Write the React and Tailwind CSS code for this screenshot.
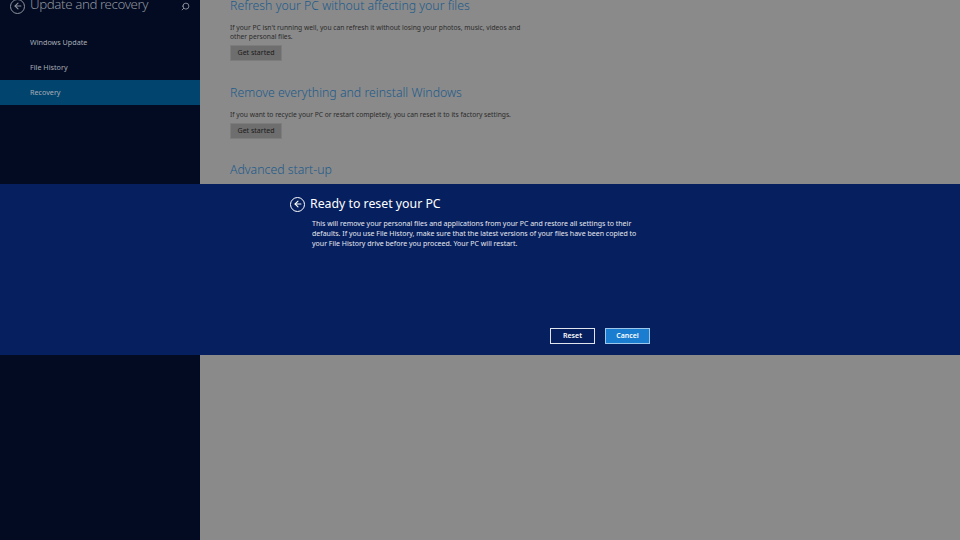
import { ArrowLeft, Search } from "lucide-react";

const BackCircle = ({ size = 15, color = "#ffffff" }) => (
  <span
    className="flex items-center justify-center rounded-full border-[1.5px] shrink-0"
    style={{ width: size, height: size, borderColor: color }}
  >
    <ArrowLeft size={size - 5} strokeWidth={2.6} color={color} />
  </span>
);

const navItems = ["Windows Update", "File History", "Recovery"];

const Section = ({ title, text, button }) => (
  <div>
    <h2 className="text-[12.3px] leading-[18px] text-[#1c5a8a] font-light">{title}</h2>
    {text && (
      <p className="mt-[8px] text-[6.7px] leading-[9px] text-[#2a2a2a] w-[296px]">{text}</p>
    )}
    {button && (
      <button className="block mt-[4px] w-[52px] h-[16px] bg-[#6e6e6e] border border-[#7c7c7c] text-[7px] leading-[14px] text-[#1a1a1a]">
        Get started
      </button>
    )}
  </div>
);

const App = () => {
  return (
    <div
      className="relative w-[960px] h-[540px] overflow-hidden flex bg-[#8a8a8a]"
      style={{ fontFamily: '"Noto Sans", "Open Sans", sans-serif' }}
    >
      <aside className="w-[200px] h-full bg-[#020b22] flex flex-col">
        <div className="flex items-center h-[14px] -mt-[1px] pl-[10px] pr-[10px]">
          <BackCircle size={15} color="#8e939d" />
          <span className="ml-[5px] text-[13.3px] leading-[15px] tracking-[-0.4px] -mt-[4px] text-[#8e939d] font-light">
            Update and recovery
          </span>
          <Search size={9} strokeWidth={2.5} color="#8e939d" className="ml-auto -scale-x-100" />
        </div>
        <nav className="mt-[17px] flex flex-col">
          {navItems.map((item) => (
            <div
              key={item}
              className={
                "h-[25px] flex items-center pl-[30px] text-[7.2px] text-[#a9adb6] " +
                (item === "Recovery" ? "bg-[#01446e]" : "")
              }
            >
              {item}
            </div>
          ))}
        </nav>
      </aside>

      <main className="flex-1 pl-[30px] -mt-[3px]">
        <Section
          title="Refresh your PC without affecting your files"
          text="If your PC isn't running well, you can refresh it without losing your photos, music, videos and other personal files."
          button
        />
        <div className="mt-[23px]">
          <Section
            title="Remove everything and reinstall Windows"
            text="If you want to recycle your PC or restart completely, you can reset it to its factory settings."
            button
          />
        </div>
        <div className="mt-[22px]">
          <Section title="Advanced start-up" />
        </div>
      </main>

      <div className="absolute left-0 right-0 top-[184px] h-[171px] bg-[#061f5e]">
        <div className="w-[360px] ml-[290px] pt-[11px]">
          <div className="flex items-center">
            <BackCircle size={15} color="#ffffff" />
            <span className="ml-[5px] text-[12.3px] leading-[18px] text-white">Ready to reset your PC</span>
          </div>
          <p className="ml-[22px] mt-[6px] text-[7px] leading-[10px] text-[#e6e9f0] w-[340px]">
            This will remove your personal files and applications from your PC and restore all settings to their defaults. If you use File History, make sure that the latest versions of your files have been copied to your File History drive before you proceed. Your PC will restart.
          </p>
          <div className="flex justify-end gap-[10px] mt-[79px]">
            <button className="w-[45px] h-[16px] border border-[#e0e4ec] text-[7px] text-white font-semibold">
              Reset
            </button>
            <button className="w-[45px] h-[16px] border border-[#9cc6ea] bg-[#1a7dd0] text-[7px] text-white font-semibold">
              Cancel
            </button>
          </div>
        </div>
      </div>
    </div>
  );
};

export default App;
